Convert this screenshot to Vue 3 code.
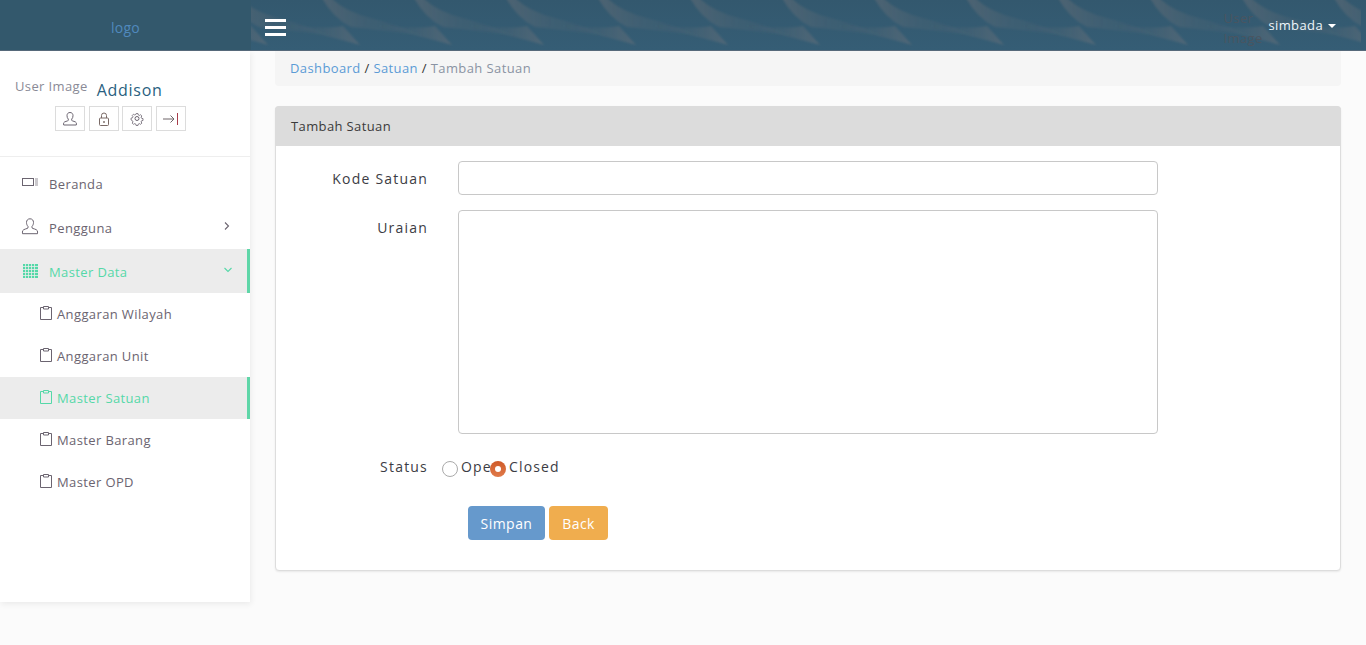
<script setup>
const subs = [
  { label: 'Anggaran Wilayah' },
  { label: 'Anggaran Unit' },
  { label: 'Master Satuan', active: true },
  { label: 'Master Barang' },
  { label: 'Master OPD' },
]
const streaks = Array.from({ length: 13 }, (_, i) => (i - 1) * 92)
</script>

<template>
  <div class="page">
    <header class="topbar">
      <div class="brand"><span class="logo">logo</span></div>
      <div class="nav">
        <svg class="streaks" width="1110" height="50" aria-hidden="true">
          <defs>
            <linearGradient id="tail" x1="0" y1="0" x2="1" y2="0">
              <stop offset="0" stop-color="#a88a80" stop-opacity=".22" />
              <stop offset=".4" stop-color="#a88a80" stop-opacity=".09" />
              <stop offset="1" stop-color="#a88a80" stop-opacity="0" />
            </linearGradient>
            <linearGradient id="low" x1="0" y1="0" x2="1" y2="0">
              <stop offset="0" stop-color="#a88a80" stop-opacity="0" />
              <stop offset=".55" stop-color="#a88a80" stop-opacity=".08" />
              <stop offset="1" stop-color="#a88a80" stop-opacity=".24" />
            </linearGradient>
            <filter id="soft" x="-10%" y="-10%" width="120%" height="120%"><feGaussianBlur stdDeviation="1" /></filter>
          </defs>
          <g v-for="x in streaks" :key="x" :transform="`translate(${x} 0)`" filter="url(#soft)">
            <path d="M71 -2 L80 -2 Q 95 12 120 18 Q 150 26 180 38 Q 130 30 100 27 Q 82 18 71 -2 Z" fill="url(#tail)" />
            <path d="M26 24 Q 70 30 92 26 L 109 45 Q 70 34 26 24 Z" fill="url(#low)" />
          </g>
        </svg>
        <button class="burger" aria-label="menu"><i></i><i></i><i></i></button>
        <div class="user-menu">
          <span class="user-img">User Image</span>
          <span class="user-name">simbada</span>
          <span class="caret"></span>
        </div>
      </div>
    </header>

    <div class="main">
      <aside class="sidebar">
        <div class="profile">
          <div class="profile-top">
            <span class="pic">User Image</span>
            <span class="pname">Addison</span>
          </div>
          <div class="tools">
            <a class="tool">
              <svg width="16" height="16" viewBox="0 0 16 16" fill="none" stroke="#6b6470" stroke-width="1">
                <path d="M8 1.500c-2 0-3 1.400-3 3.200 0 1.400.5 2.600 1.300 3.400v1.300c-.6.8-4 1-4.600 2.400-.2.600-.2 1.400 0 2.200h12.600c.2-.8.2-1.600 0-2.200-.6-1.400-4-1.600-4.600-2.400V8.100c.8-.8 1.300-2 1.300-3.400 0-1.800-1-3.200-3-3.200z"/>
              </svg>
            </a>
            <a class="tool">
              <svg width="16" height="16" viewBox="0 0 16 16" fill="none" stroke="#7a6a66" stroke-width="1">
                <rect x="3.500" y="7" width="9" height="7.500" rx="1"/>
                <path d="M5.500 7V4.500a2.500 2.500 0 0 1 5 0V7"/>
                <path d="M8 10v2" stroke-width="1.400"/>
              </svg>
            </a>
            <a class="tool tight">
              <svg width="16" height="16" viewBox="0 0 16 16" fill="none" stroke="#6b6470" stroke-width="1">
                <path d="M6.900 2h2.200l.4 1.700 1.300.6 1.500-.9 1.500 1.500-.9 1.500.6 1.300 1.700.4v2.200l-1.700.4-.6 1.300.9 1.500-1.500 1.500-1.500-.9-1.300.6-.4 1.700H6.900l-.4-1.700-1.300-.6-1.500.9-1.500-1.500.9-1.500-.6-1.300L.8 9.700V7.500l1.700-.4.6-1.300-.9-1.500 1.500-1.500 1.500.9 1.300-.6z" transform="translate(1.400 .9) scale(.83)"/>
                <circle cx="8" cy="7.500" r="2"/>
              </svg>
            </a>
            <a class="tool">
              <svg width="18" height="16" viewBox="0 0 18 16" fill="none" stroke-width="1">
                <path d="M1 8h11M8.500 4.500 12 8l-3.500 3.500" stroke="#6e6468"/>
                <path d="M15.500 2v12" stroke="#a83c4a"/>
              </svg>
            </a>
          </div>
        </div>

        <nav class="menu">
          <a class="item">
            <svg class="ico" width="18" height="16" viewBox="0 0 18 16" fill="none" stroke="#6b6470" stroke-width="1">
              <rect x="1.500" y="3.500" width="11" height="7"/>
              <path d="M14 4h3M14 6h3M14 8h3M14 10h3" stroke-width=".7"/>
            </svg>
            <span>Beranda</span>
          </a>
          <a class="item">
            <svg class="ico" width="18" height="18" viewBox="0 0 18 18" fill="none" stroke="#6b6470" stroke-width="1">
              <path d="M9 .800c-2.300 0-3.500 1.600-3.500 3.700 0 1.600.6 3 1.500 3.900v1.500c-.7.900-4.600 1.200-5.300 2.800-.3.800-.3 1.800-.2 3h15c.1-1.200.1-2.200-.2-3-.7-1.600-4.600-1.900-5.300-2.800V8.400c.9-.9 1.500-2.300 1.500-3.900C12.500 2.400 11.300.8 9 .8z"/>
            </svg>
            <span>Pengguna</span>
            <svg class="chev" width="8" height="10" viewBox="0 0 8 10" fill="none" stroke="#6b6470" stroke-width="1.100"><path d="M2 1.500 5.500 5 2 8.500"/></svg>
          </a>
          <a class="item on">
            <svg class="ico" width="16" height="16" viewBox="0 0 16 16" aria-hidden="true">
              <path d="M1 1h15v14H1z" fill="#55d8a8" />
              <path d="M1 3.500h15M1 6.500h15M1 9.500h15M1 12.500h15M3.500 1v14M6.500 1v14M9.500 1v14M12.500 1v14" stroke="#ececec" stroke-width=".8" fill="none"/>
            </svg>
            <span>Master Data</span>
            <svg class="chev down" width="10" height="8" viewBox="0 0 10 8" fill="none" stroke="#55d8a8" stroke-width="1.100"><path d="M1.500 2 5 5.500 8.500 2"/></svg>
          </a>
          <ul class="subs">
            <li v-for="s in subs" :key="s.label" class="sub" :class="{ on: s.active }">
              <svg width="12" height="14" viewBox="0 0 12 14" fill="none" stroke="currentColor" stroke-width="1" class="clip">
                <path d="M3.500 1.500H.5v12h11v-12h-3"/>
                <path d="M3.500 3V.5h5V3z"/>
              </svg>
              <span>{{ s.label }}</span>
            </li>
          </ul>
        </nav>
      </aside>

      <main class="content">
        <div class="crumbs">
          <a>Dashboard</a><span class="sep"> / </span><a>Satuan</a><span class="sep"> / </span><span class="cur">Tambah Satuan</span>
        </div>

        <section class="panel">
          <div class="panel-head">Tambah Satuan</div>
          <form class="form" @submit.prevent>
            <div class="row">
              <label class="lbl" for="kode">Kode Satuan</label>
              <input id="kode" class="ctl" type="text" />
            </div>
            <div class="row">
              <label class="lbl" for="uraian">Uraian</label>
              <textarea id="uraian" class="ctl area"></textarea>
            </div>
            <div class="row status">
              <span class="lbl">Status</span>
              <div class="radios">
                <span class="radio"></span><span class="rt open">Open</span>
                <span class="radio checked"></span><span class="rt">Closed</span>
              </div>
            </div>
            <div class="actions">
              <button class="btn blue" type="button">Simpan</button>
              <button class="btn amber" type="button">Back</button>
            </div>
          </form>
        </section>
      </main>
    </div>
  </div>
</template>

<style>
html, body { margin: 0; background: #fbfbfb; }
</style>

<style scoped>
.page {
  min-height: 645px;
  background: #fbfbfb;
  font-family: "Open Sans", "Liberation Sans", sans-serif;
  font-size: 13px;
  letter-spacing: .38px;
  color: #6b6470;
  overflow: hidden;
}
.topbar {
  height: 50px;
  display: flex;
  background: linear-gradient(#33586e, #355d75);
  border-bottom: 1px solid #56697a;
  position: relative;
  z-index: 3;
}
.brand {
  width: 251px;
  flex: none;
  display: flex;
  align-items: center;
  justify-content: center;
  background: #33586c;
}
.logo { color: #5089bd; font-size: 14px; letter-spacing: .3px; margin-top: 4px; }
.nav {
  flex: 1;
  display: flex;
  align-items: center;
  justify-content: space-between;
  position: relative;
  min-width: 0;
}
.streaks { position: absolute; left: 0; top: 0; pointer-events: none; }
.burger {
  position: relative;
  width: 21px;
  height: 17px;
  margin-left: 14px;
  margin-top: 4px;
  padding: 0;
  border: 0;
  background: none;
  display: flex;
  flex-direction: column;
  justify-content: space-between;
}
.burger i { display: block; height: 3px; background: #fff; }
.user-menu {
  position: relative;
  display: flex;
  align-items: center;
  margin-right: 30px;
  color: #fff;
}
.user-img {
  width: 45px;
  color: #4a5560;
  font-size: 13px;
  line-height: 20px;
  height: 40px;
  margin-top: 5px;
}
.user-name { color: #eef6fb; }
.caret {
  width: 0; height: 0;
  margin-left: 5px;
  margin-top: 2px;
  border-top: 4px solid #fff;
  border-left: 4px solid transparent;
  border-right: 4px solid transparent;
}

.main { display: flex; align-items: flex-start; }
.sidebar {
  width: 250px;
  flex: none;
  height: 551px;
  background: #fff;
  box-shadow: 1px 2px 6px rgba(0, 0, 0, .07);
}
.profile {
  height: 105px;
  border-bottom: 1px solid #eeeeee;
}
.profile-top {
  display: flex;
  padding: 25px 0 0 15px;
  height: 30px;
}
.pic { color: #8a8a96; margin-top: 1px; }
.pname { color: #2a5f80; font-size: 16px; margin-left: 9px; margin-top: 3px; letter-spacing: .72px; }
.tools {
  display: flex;
  gap: 4px;
  padding-left: 55px;
}
.tool {
  width: 30px;
  height: 25px;
  border: 1px solid #dcdcdc;
  display: flex;
  align-items: center;
  justify-content: center;
  box-sizing: border-box;
}
.tool.tight { margin-left: -1px; }

.menu { padding-top: 4px; }
.item {
  height: 44px;
  padding: 2px 0 0 21px;
  display: flex;
  align-items: center;
  position: relative;
  color: #6b6470;
  box-sizing: border-box;
}
.item .ico { flex: none; width: 18px; margin-right: 10px; margin-top: -2px; }
.chev { position: absolute; right: 19px; top: 16px; }
.chev.down { right: 14px; top: 17px; }
.item.on {
  background: #ececec;
  color: #55d8a8;
  border-right: 3px solid #5fd6a8;
  width: 250px;
}
.subs { list-style: none; margin: 0; padding: 0; }
.sub {
  height: 42px;
  display: flex;
  align-items: center;
  padding-left: 40px;
  box-sizing: border-box;
  color: #6b6470;
}
.sub .clip { flex: none; margin-right: 5px; margin-top: -3px; }
.sub.on {
  background: #ececec;
  color: #55d8a8;
  border-right: 3px solid #5fd6a8;
}

.content { flex: 1; min-width: 0; padding: 0 25px; }
.crumbs {
  height: 35px;
  line-height: 35px;
  background: #f5f5f5;
  border-radius: 0 0 4px 4px;
  padding-left: 15px;
  color: #8a93a3;
  letter-spacing: .4px;
}
.crumbs a { color: #5b9bd5; }
.crumbs .sep { color: #333; }
.panel {
  margin-top: 20px;
  height: 465px;
  box-sizing: border-box;
  background: #fff;
  border: 1px solid #dddddd;
  border-radius: 4px;
  box-shadow: 0 1px 2px rgba(0, 0, 0, .08);
}
.panel-head {
  height: 40px;
  line-height: 40px;
  margin: -1px -1px 0;
  border-radius: 4px 4px 0 0;
  background: #dcdcdc;
  padding-left: 16px;
  color: #3a3a3a;
}
.form { padding-top: 15px; }
.row { display: flex; margin-bottom: 15px; }
.lbl {
  width: 152px;
  flex: none;
  text-align: right;
  color: #3c3c44;
  font-size: 14px;
  letter-spacing: 1.2px;
  line-height: 36px;
  height: 34px;
}
.ctl {
  margin-left: 30px;
  width: 700px;
  height: 34px;
  box-sizing: border-box;
  border: 1px solid #c8c8c8;
  border-radius: 4px;
  background: #fff;
  outline: none;
  padding: 6px 12px;
  display: block;
  resize: none;
}
.area { height: 224px; }
.row.status { margin-top: 16px; height: 34px; margin-bottom: 22px; }
.row.status .lbl { line-height: 34px; }
.radios {
  display: flex;
  align-items: flex-start;
  margin-left: 14px;
  margin-top: 8px;
  font-size: 14px;
  letter-spacing: 1.15px;
  color: #3c3c44;
  line-height: 18px;
}
.radio {
  width: 16px;
  height: 16px;
  box-sizing: border-box;
  border: 1px solid #aaaaaa;
  border-radius: 50%;
  background: #fff;
  margin-top: 3px;
  flex: none;
  position: relative;
  z-index: 1;
}
.radio.checked {
  background: linear-gradient(#cf5a28, #e07a4a);
  border: 0;
}
.radio.checked::after {
  content: "";
  position: absolute;
  left: 5px;
  top: 5px;
  width: 6px;
  height: 6px;
  background: #fff;
  border-radius: 50%;
}
.rt { margin-left: 3px; }
.rt.open { width: 29px; white-space: nowrap; }
.actions {
  display: flex;
  gap: 4px;
  padding-left: 192px;
}
.btn {
  height: 34px;
  border: 0;
  border-radius: 4px;
  color: #fff;
  font: inherit;
  font-size: 14px;
  letter-spacing: .45px;
  padding: 0;
}
.btn.blue { width: 77px; background: #6699cc; }
.btn.amber { width: 59px; background: #f0ad4e; }
</style>
